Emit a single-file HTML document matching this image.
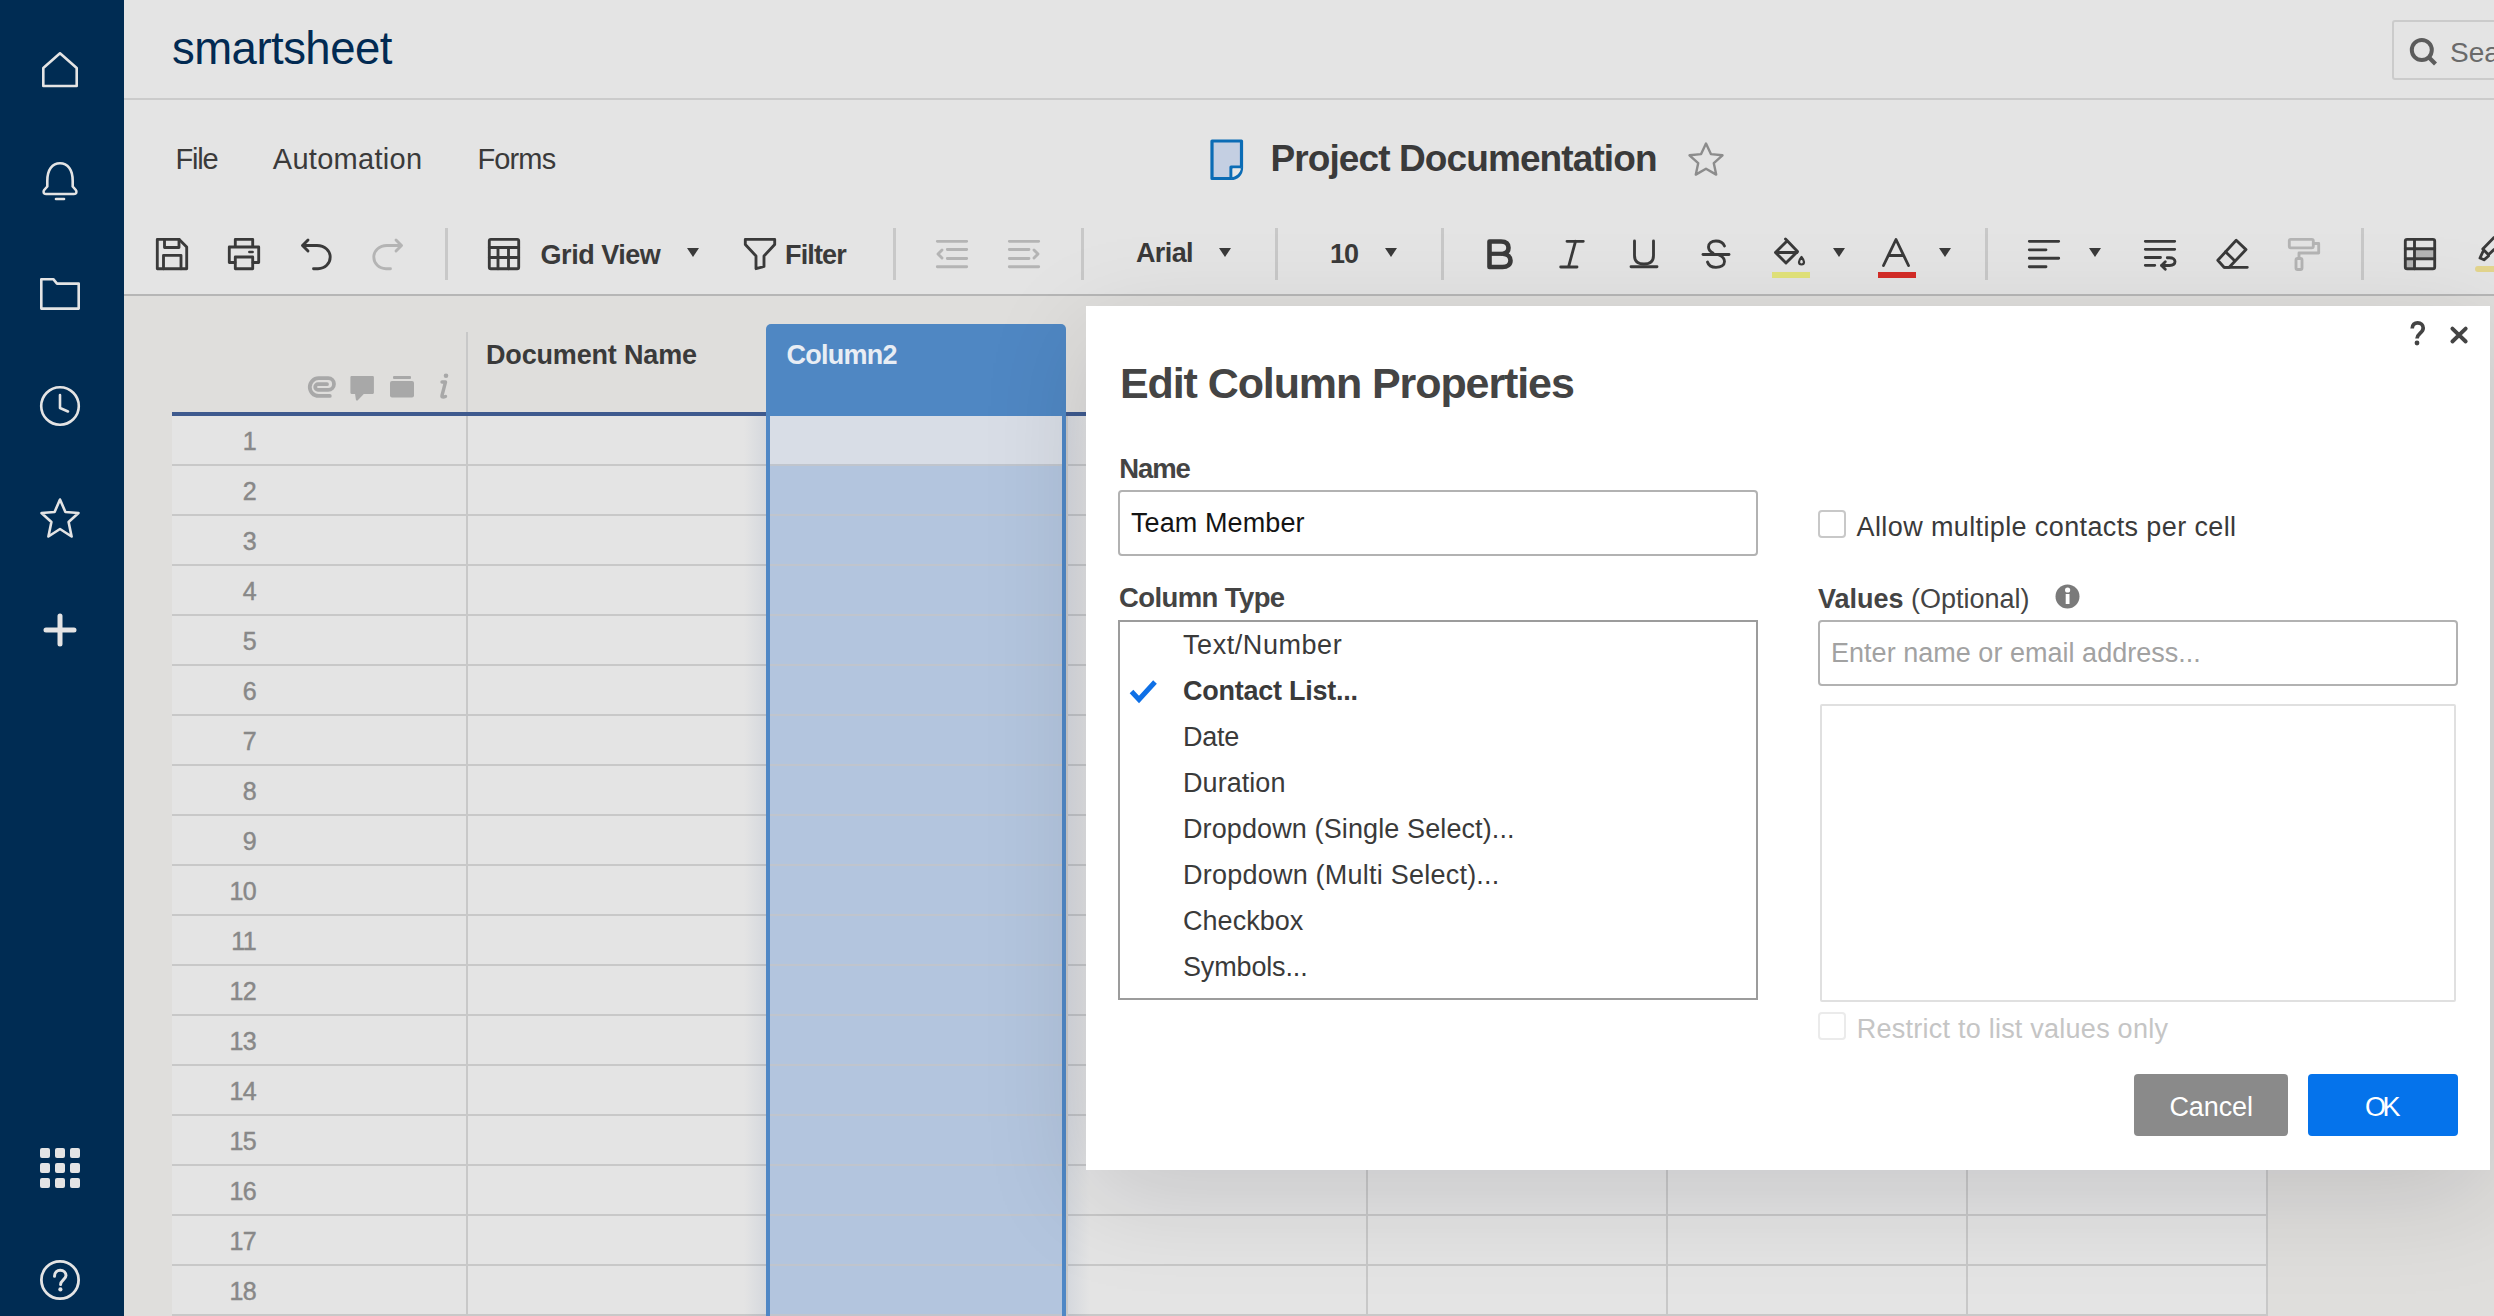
<!DOCTYPE html>
<html><head><meta charset="utf-8"><title>Smartsheet - Edit Column Properties</title>
<style>
html,body{margin:0;padding:0;}
body{width:2494px;height:1316px;overflow:hidden;position:relative;background:#e4e4e4;font-family:"Liberation Sans",sans-serif;}
.a{position:absolute;display:block;}
.t{position:absolute;white-space:nowrap;}
svg{overflow:visible;}
</style></head><body>
<div class="a" style="left:0px;top:0px;width:124px;height:1316px;background:#002c53;"></div>
<svg class="a" style="left:0px;top:0px;" width="124" height="1316" viewBox="0 0 124 1316"><path d="M43.3 68 L60 53.3 L76.7 68 L76.7 86 L43.3 86 Z" fill="none" stroke="#e4e4e4" stroke-width="2.6" stroke-linejoin="round" stroke-linecap="round"/><path d="M47.3 181 C47.3 169.5 52.5 163.3 60 163.3 C67.5 163.3 72.7 169.5 72.7 181 L72.7 186.5 L75.8 190 C77.3 192 76.3 194 74 194 L46 194 C43.7 194 42.7 192 44.2 190 L47.3 186.5 Z" fill="none" stroke="#e4e4e4" stroke-width="2.6" stroke-linejoin="round" stroke-linecap="round"/><path d="M56 199 L64 199" fill="none" stroke="#e4e4e4" stroke-width="2.6" stroke-linejoin="round" stroke-linecap="round"/><path d="M41.3 279.2 L53.3 279.2 L57 283.6 L78.7 283.6 L78.7 308.6 L41.3 308.6 Z" fill="none" stroke="#e4e4e4" stroke-width="2.6" stroke-linejoin="round" stroke-linecap="round"/><circle cx="60" cy="406" r="18.8" fill="none" stroke="#e4e4e4" stroke-width="2.6" stroke-linejoin="round" stroke-linecap="round"/><path d="M60 395 L60 408 L68 411.5" fill="none" stroke="#e4e4e4" stroke-width="2.6" stroke-linejoin="round" stroke-linecap="round"/><path d="M60 499.5 L65.4 512 L78.5 513 L68.6 522 L71.6 536.5 L60 529 L48.4 536.5 L51.4 522 L41.5 513 L54.6 512 Z" fill="none" stroke="#e4e4e4" stroke-width="2.6" stroke-linejoin="round" stroke-linecap="round"/><path d="M60 616 L60 644 M46 630 L74 630" fill="none" stroke="#e4e4e4" stroke-width="5" stroke-linecap="round"/></svg>
<div class="a" style="left:40px;top:1148px;width:10px;height:10px;background:#e4e4e4;border-radius:2px;"></div>
<div class="a" style="left:55px;top:1148px;width:10px;height:10px;background:#e4e4e4;border-radius:2px;"></div>
<div class="a" style="left:70px;top:1148px;width:10px;height:10px;background:#e4e4e4;border-radius:2px;"></div>
<div class="a" style="left:40px;top:1163px;width:10px;height:10px;background:#e4e4e4;border-radius:2px;"></div>
<div class="a" style="left:55px;top:1163px;width:10px;height:10px;background:#e4e4e4;border-radius:2px;"></div>
<div class="a" style="left:70px;top:1163px;width:10px;height:10px;background:#e4e4e4;border-radius:2px;"></div>
<div class="a" style="left:40px;top:1178px;width:10px;height:10px;background:#e4e4e4;border-radius:2px;"></div>
<div class="a" style="left:55px;top:1178px;width:10px;height:10px;background:#e4e4e4;border-radius:2px;"></div>
<div class="a" style="left:70px;top:1178px;width:10px;height:10px;background:#e4e4e4;border-radius:2px;"></div>
<svg class="a" style="left:0px;top:0px;" width="124" height="1316" viewBox="0 0 124 1316"><circle cx="60" cy="1280" r="18.6" fill="none" stroke="#e4e4e4" stroke-width="2.8"/><path d="M54.5 1276.3 C54.5 1272.3 57.2 1270.2 60.2 1270.2 C63.6 1270.2 66 1272.5 66 1275.6 C66 1279.2 60.6 1280.2 60.6 1284.6" fill="none" stroke="#e4e4e4" stroke-width="3" stroke-linecap="round"/><circle cx="60.4" cy="1289.4" r="2.1" fill="#e4e4e4"/></svg>
<div class="a" style="left:124px;top:98px;width:2370px;height:2px;background:#cbcbcb;"></div>
<div class="t" style="left:172px;top:25.5px;font-size:45.5px;line-height:45.5px;color:#022a52;font-weight:400;letter-spacing:-0.522px;">smartsheet</div>
<div class="a" style="left:2392px;top:20px;width:200px;height:56px;background:transparent;border:2px solid #cbcbcb;border-radius:3px;"></div>
<svg class="a" style="left:2405px;top:34px;" width="40" height="36" viewBox="0 0 40 36"><circle cx="16.8" cy="16" r="10" fill="none" stroke="#5c5c5c" stroke-width="4"/><path d="M23.5 23 L30.5 30" stroke="#5c5c5c" stroke-width="4.2" stroke-linecap="butt"/></svg>
<div class="t" style="left:2450px;top:38.8px;font-size:28px;line-height:28px;color:#6a6a6a;font-weight:400;">Search</div>
<div class="t" style="left:175.5px;top:144.5px;font-size:29px;line-height:29px;color:#3a3a3a;font-weight:400;letter-spacing:-1.167px;">File</div>
<div class="t" style="left:272.8px;top:144.5px;font-size:29px;line-height:29px;color:#3a3a3a;font-weight:400;letter-spacing:0.289px;">Automation</div>
<div class="t" style="left:477.4px;top:144.5px;font-size:29px;line-height:29px;color:#3a3a3a;font-weight:400;letter-spacing:-0.85px;">Forms</div>
<svg class="a" style="left:1210px;top:139px;" width="34" height="42" viewBox="0 0 34 42"><path d="M2 2 L31.5 2 L31.5 29 C31.5 35 27 39.5 21 39.5 L2 39.5 Z" fill="#c4cfe2" stroke="#0b6cb5" stroke-width="3.2" stroke-linejoin="round"/><path d="M31.5 28 L21 28 L21 39.5" fill="#fff" stroke="#0b6cb5" stroke-width="3.2" stroke-linejoin="round"/><path d="M31 29.6 L22.6 29.6 L22.6 38 C27 37 30 34 31 29.6 Z" fill="#e6e6e6"/></svg>
<div class="t" style="left:1270.5px;top:139.7px;font-size:37px;line-height:37px;color:#3a3a3a;font-weight:700;letter-spacing:-0.9px;">Project Documentation</div>
<svg class="a" style="left:1686px;top:140px;" width="40" height="40" viewBox="0 0 40 40"><path d="M20 3.5 L24.9 14.1 L36.5 15.3 L27.8 23.2 L30.2 34.6 L20 28.7 L9.8 34.6 L12.2 23.2 L3.5 15.3 L15.1 14.1 Z" fill="none" stroke="#8c8c8c" stroke-width="2.4" stroke-linejoin="round"/></svg>
<svg class="a" style="left:0px;top:0px;" width="2494" height="300" viewBox="0 0 2494 300"><path d="M157.3 239.3 L179 239.3 L186.7 247 L186.7 268.7 L157.3 268.7 Z" fill="none" stroke="#3a3a3a" stroke-width="2.85" stroke-linejoin="round" stroke-linecap="round"/><path d="M164.5 239.3 L164.5 247.5 L179 247.5 L179 239.3" fill="none" stroke="#3a3a3a" stroke-width="2.85" stroke-linejoin="round" stroke-linecap="round"/><path d="M163.5 268.7 L163.5 255.3 L181 255.3 L181 268.7" fill="none" stroke="#3a3a3a" stroke-width="2.85" stroke-linejoin="round" stroke-linecap="round"/><path d="M235.3 246.5 L235.3 239.3 L252.7 239.3 L252.7 246.5" fill="none" stroke="#3a3a3a" stroke-width="2.85" stroke-linejoin="round" stroke-linecap="round"/><path d="M235 262.5 L229.3 262.5 L229.3 247 L258.7 247 L258.7 262.5 L253 262.5" fill="none" stroke="#3a3a3a" stroke-width="2.85" stroke-linejoin="round" stroke-linecap="round"/><path d="M235.3 257 L252.7 257 L252.7 268.7 L235.3 268.7 Z" fill="none" stroke="#3a3a3a" stroke-width="2.85" stroke-linejoin="round" stroke-linecap="round"/><path d="M249.3 252 L252.7 252" fill="none" stroke="#3a3a3a" stroke-width="2.4" stroke-linejoin="round" stroke-linecap="round"/><path d="M308 240 L302.5 245.5 L308 251" fill="none" stroke="#3a3a3a" stroke-width="2.85" stroke-linejoin="round" stroke-linecap="round"/><path d="M303 245.5 L317 245.5 C325 245.5 330.2 251 330.2 257 C330.2 263.5 325 268.7 318 268.7 L313.5 268.7" fill="none" stroke="#3a3a3a" stroke-width="2.85" stroke-linejoin="round" stroke-linecap="round"/><path d="M396 240 L401.5 245.5 L396 251" fill="none" stroke="#b4b4b4" stroke-width="2.85" stroke-linejoin="round" stroke-linecap="round"/><path d="M401 245.5 L387 245.5 C379 245.5 373.8 251 373.8 257 C373.8 263.5 379 268.7 386 268.7 L390.5 268.7" fill="none" stroke="#b4b4b4" stroke-width="2.85" stroke-linejoin="round" stroke-linecap="round"/><rect x="489.3" y="239.3" width="29.4" height="29.4" rx="1.5" fill="none" stroke="#3a3a3a" stroke-width="2.85" stroke-linejoin="round" stroke-linecap="round"/><path d="M489.3 247.5 L518.7 247.5 M489.3 257.5 L518.7 257.5 M498 247.5 L498 268.7 M508.5 247.5 L508.5 268.7" fill="none" stroke="#3a3a3a" stroke-width="2.85" stroke-linejoin="round" stroke-linecap="round"/><path d="M745.3 239.3 L774.7 239.3 L774.7 244.5 L764 256 L764 266.5 L756 268.7 L756 256 L745.3 244.5 Z" fill="none" stroke="#3a3a3a" stroke-width="2.85" stroke-linejoin="round" stroke-linecap="round"/><path d="M937.3 241.3 L966.7 241.3 M947.3 249.5 L966.7 249.5 M947.3 258.5 L966.7 258.5 M937.3 266.7 L966.7 266.7" fill="none" stroke="#b4b4b4" stroke-width="2.85" stroke-linejoin="round" stroke-linecap="round"/><path d="M942 250 L938 254 L942 258" fill="none" stroke="#b4b4b4" stroke-width="2.85" stroke-linejoin="round" stroke-linecap="round"/><path d="M1009.3 241.3 L1038.7 241.3 M1009.3 249.5 L1029 249.5 M1009.3 258.5 L1029 258.5 M1009.3 266.7 L1038.7 266.7" fill="none" stroke="#b4b4b4" stroke-width="2.85" stroke-linejoin="round" stroke-linecap="round"/><path d="M1034 250 L1038 254 L1034 258" fill="none" stroke="#b4b4b4" stroke-width="2.85" stroke-linejoin="round" stroke-linecap="round"/><path d="M1489.5 241.5 L1501 241.5 C1506 241.5 1508.5 244 1508.5 247.8 C1508.5 251 1506.5 253.3 1503 253.8 C1507.5 254.2 1510.5 257 1510.5 260.5 C1510.5 264.5 1507.5 267 1502.5 267 L1489.5 267 Z" fill="none" stroke="#3a3a3a" stroke-width="4.6" stroke-linejoin="round"/><path d="M1491 253.8 L1502 253.8" stroke="#3a3a3a" stroke-width="4.2"/><path d="M1567 241.3 L1583.3 241.3 M1560.7 267 L1577 267 M1575.5 241.3 L1568.5 267" fill="none" stroke="#3a3a3a" stroke-width="2.85" stroke-linejoin="round" stroke-linecap="round"/><path d="M1634.5 241 L1634.5 255.5 C1634.5 261 1638 264 1644 264 C1650 264 1653.5 261 1653.5 255.5 L1653.5 241" fill="none" stroke="#3a3a3a" stroke-width="2.85" stroke-linejoin="round" stroke-linecap="round"/><path d="M1631 266.7 L1657 266.7" fill="none" stroke="#3a3a3a" stroke-width="2.85" stroke-linejoin="round" stroke-linecap="round"/><path d="M1724.5 246 C1723 242.5 1720 241 1716 241 C1711.5 241 1708.5 243.5 1708.5 247 C1708.5 249.5 1710 251.5 1713 253" fill="none" stroke="#3a3a3a" stroke-width="2.85" stroke-linejoin="round" stroke-linecap="round"/><path d="M1719 255 C1722.5 256.5 1724.5 258.5 1724.5 261.5 C1724.5 265 1721 267.3 1716 267.3 C1711.5 267.3 1708.5 265.5 1707.5 262" fill="none" stroke="#3a3a3a" stroke-width="2.85" stroke-linejoin="round" stroke-linecap="round"/><path d="M1703 254.5 L1729 254.5" fill="none" stroke="#3a3a3a" stroke-width="2.85" stroke-linejoin="round" stroke-linecap="round"/><path d="M1785.5 239 L1787 240.5 L1797.5 251.5 L1786 263 L1775.5 252.5 L1786 242" fill="none" stroke="#3a3a3a" stroke-width="2.85" stroke-linejoin="round" stroke-linecap="round"/><path d="M1776 252.5 L1797 252.5" fill="none" stroke="#3a3a3a" stroke-width="2.85" stroke-linejoin="round" stroke-linecap="round"/><path d="M1801.5 257 C1799.5 259.5 1799 261 1799 262 C1799 263.5 1800.2 264.5 1801.5 264.5 C1802.8 264.5 1804 263.5 1804 262 C1804 261 1803.5 259.5 1801.5 257 Z" fill="none" stroke="#3a3a3a" stroke-width="2.2" stroke-linejoin="round" stroke-linecap="round"/><path d="M1883.5 265.5 L1896 239.5 L1908.5 265.5 M1888.5 255.5 L1903.5 255.5" fill="none" stroke="#3a3a3a" stroke-width="2.85" stroke-linejoin="round" stroke-linecap="round"/><path d="M2029.3 241.3 L2058.7 241.3 M2029.3 249.8 L2046 249.8 M2029.3 258.2 L2058.7 258.2 M2029.3 266.7 L2046 266.7" fill="none" stroke="#3a3a3a" stroke-width="2.85" stroke-linejoin="round" stroke-linecap="round"/><path d="M2145.3 241.3 L2174.7 241.3 M2145.3 249.3 L2174.7 249.3 M2145.3 257.5 L2160.5 257.5 M2145.3 265.3 L2154.8 265.3" fill="none" stroke="#3a3a3a" stroke-width="2.85" stroke-linejoin="round" stroke-linecap="round"/><path d="M2167.3 257.7 L2169.5 257.7 C2173 257.7 2175 259.5 2175 261.6 C2175 263.8 2173 265.5 2169.5 265.5 L2161.8 265.5" fill="none" stroke="#3a3a3a" stroke-width="2.85" stroke-linejoin="round" stroke-linecap="round"/><path d="M2165.3 261.8 L2161.5 265.5 L2165.3 269.2" fill="none" stroke="#3a3a3a" stroke-width="2.85" stroke-linejoin="round" stroke-linecap="round"/><path d="M2236.2 240.3 L2246 249.6 L2229.2 267.3 L2224 267.3 L2217.8 260.3 Z" fill="none" stroke="#3a3a3a" stroke-width="2.85" stroke-linejoin="round" stroke-linecap="round"/><path d="M2225.5 251.8 L2234.2 260.2 M2224.5 267.3 L2247.3 267.3" fill="none" stroke="#3a3a3a" stroke-width="2.85" stroke-linejoin="round" stroke-linecap="round"/><rect x="2289.3" y="239.3" width="24" height="8.5" rx="1.5" fill="none" stroke="#b4b4b4" stroke-width="2.85" stroke-linejoin="round" stroke-linecap="round"/><path d="M2313.3 243.5 L2318.7 243.5 L2318.7 253 L2299 253 L2299 258.5" fill="none" stroke="#b4b4b4" stroke-width="2.85" stroke-linejoin="round" stroke-linecap="round"/><rect x="2296" y="258.5" width="6" height="11" rx="1.5" fill="none" stroke="#b4b4b4" stroke-width="2.85" stroke-linejoin="round" stroke-linecap="round"/><rect x="2416" y="250" width="18" height="7.5" fill="#b4b4b4"/><rect x="2406" y="260" width="8" height="7.5" fill="#b4b4b4"/><rect x="2405.3" y="239.3" width="29.4" height="29.4" rx="1.8" fill="none" stroke="#3a3a3a" stroke-width="2.85" stroke-linejoin="round" stroke-linecap="round"/><path d="M2405.3 248.7 L2434.7 248.7 M2405.3 258.7 L2434.7 258.7 M2414.5 239.3 L2414.5 268.7" fill="none" stroke="#3a3a3a" stroke-width="2.85" stroke-linejoin="round" stroke-linecap="round"/><path d="M2494 237.5 L2482.8 249 L2488.5 254.8 L2494 249.5" fill="none" stroke="#3a3a3a" stroke-width="2.85" stroke-linejoin="round" stroke-linecap="round"/><path d="M2483 251.5 L2480 258 L2484 259.8 L2488.5 256" fill="none" stroke="#3a3a3a" stroke-width="2.85" stroke-linejoin="round" stroke-linecap="round"/></svg>
<div class="a" style="left:1772px;top:272px;width:38px;height:6px;background:#e2e37a;"></div>
<div class="a" style="left:1878px;top:272px;width:38px;height:6px;background:#d42c27;"></div>
<div class="a" style="left:2475px;top:266px;width:30px;height:6px;background:#e3d58e;border-radius:3px;"></div>
<div class="a" style="left:445px;top:228px;width:3px;height:52px;background:#c8c8c8;"></div>
<div class="a" style="left:893px;top:228px;width:3px;height:52px;background:#c8c8c8;"></div>
<div class="a" style="left:1081px;top:228px;width:3px;height:52px;background:#c8c8c8;"></div>
<div class="a" style="left:1275px;top:228px;width:3px;height:52px;background:#c8c8c8;"></div>
<div class="a" style="left:1441px;top:228px;width:3px;height:52px;background:#c8c8c8;"></div>
<div class="a" style="left:1985px;top:228px;width:3px;height:52px;background:#c8c8c8;"></div>
<div class="a" style="left:2361px;top:228px;width:3px;height:52px;background:#c8c8c8;"></div>
<svg class="a" style="left:0px;top:0px;" width="2494" height="300" viewBox="0 0 2494 300"><path d="M687 248 L699 248 L693 257 Z" fill="#3a3a3a"/><path d="M1219 248 L1231 248 L1225 257 Z" fill="#3a3a3a"/><path d="M1385 248 L1397 248 L1391 257 Z" fill="#3a3a3a"/><path d="M1833 248 L1845 248 L1839 257 Z" fill="#3a3a3a"/><path d="M1939 248 L1951 248 L1945 257 Z" fill="#3a3a3a"/><path d="M2089 248 L2101 248 L2095 257 Z" fill="#3a3a3a"/></svg>
<div class="t" style="left:540.6px;top:241.5px;font-size:27px;line-height:27px;color:#3a3a3a;font-weight:700;letter-spacing:-0.487px;">Grid View</div>
<div class="t" style="left:785px;top:241.5px;font-size:27px;line-height:27px;color:#3a3a3a;font-weight:700;letter-spacing:-0.86px;">Filter</div>
<div class="t" style="left:1136px;top:239.7px;font-size:27px;line-height:27px;color:#3a3a3a;font-weight:700;letter-spacing:-0.625px;">Arial</div>
<div class="t" style="left:1330px;top:241.3px;font-size:27px;line-height:27px;color:#3a3a3a;font-weight:700;letter-spacing:-1.0px;">10</div>
<div class="a" style="left:124px;top:294px;width:2370px;height:2px;background:#b6b6b6;"></div>
<div class="a" style="left:124px;top:296px;width:2370px;height:1020px;background:#dfdedc;"></div>
<div class="a" style="left:172px;top:416px;width:2094px;height:900px;background:#e4e4e4;"></div>
<div class="a" style="left:172px;top:464px;width:2096px;height:2px;background:#c8c8c8;"></div>
<div class="a" style="left:172px;top:514px;width:2096px;height:2px;background:#c8c8c8;"></div>
<div class="a" style="left:172px;top:564px;width:2096px;height:2px;background:#c8c8c8;"></div>
<div class="a" style="left:172px;top:614px;width:2096px;height:2px;background:#c8c8c8;"></div>
<div class="a" style="left:172px;top:664px;width:2096px;height:2px;background:#c8c8c8;"></div>
<div class="a" style="left:172px;top:714px;width:2096px;height:2px;background:#c8c8c8;"></div>
<div class="a" style="left:172px;top:764px;width:2096px;height:2px;background:#c8c8c8;"></div>
<div class="a" style="left:172px;top:814px;width:2096px;height:2px;background:#c8c8c8;"></div>
<div class="a" style="left:172px;top:864px;width:2096px;height:2px;background:#c8c8c8;"></div>
<div class="a" style="left:172px;top:914px;width:2096px;height:2px;background:#c8c8c8;"></div>
<div class="a" style="left:172px;top:964px;width:2096px;height:2px;background:#c8c8c8;"></div>
<div class="a" style="left:172px;top:1014px;width:2096px;height:2px;background:#c8c8c8;"></div>
<div class="a" style="left:172px;top:1064px;width:2096px;height:2px;background:#c8c8c8;"></div>
<div class="a" style="left:172px;top:1114px;width:2096px;height:2px;background:#c8c8c8;"></div>
<div class="a" style="left:172px;top:1164px;width:2096px;height:2px;background:#c8c8c8;"></div>
<div class="a" style="left:172px;top:1214px;width:2096px;height:2px;background:#c8c8c8;"></div>
<div class="a" style="left:172px;top:1264px;width:2096px;height:2px;background:#c8c8c8;"></div>
<div class="a" style="left:172px;top:1314px;width:2096px;height:2px;background:#c8c8c8;"></div>
<div class="a" style="left:466px;top:332px;width:2px;height:984px;background:#c8c8c8;"></div>
<div class="a" style="left:1066px;top:416px;width:2px;height:900px;background:#c8c8c8;"></div>
<div class="a" style="left:1366px;top:416px;width:2px;height:900px;background:#c8c8c8;"></div>
<div class="a" style="left:1666px;top:416px;width:2px;height:900px;background:#c8c8c8;"></div>
<div class="a" style="left:1966px;top:416px;width:2px;height:900px;background:#c8c8c8;"></div>
<div class="a" style="left:2266px;top:416px;width:2px;height:900px;background:#c8c8c8;"></div>
<div class="a" style="left:172px;top:412px;width:2094px;height:4px;background:#3e5a8e;"></div>
<svg class="a" style="left:0px;top:0px;" width="2494" height="1316" viewBox="0 0 2494 1316"><path d="M329.8 395.9 L318.6 395.9 A8.85 8.85 0 0 1 318.6 378.2 L328.2 378.2 A5.8 5.8 0 0 1 328.2 389.8 L318 389.8 A2.8 2.8 0 0 1 318 384.2 L327 384.2" fill="none" stroke="#a8a8a8" stroke-width="3.8" stroke-linecap="round"/><path d="M351.5 377.2 L372.8 377.2 L372.8 392.8 L363.5 392.8 L357 399.5 L356 392.8 L351.5 392.8 Z" fill="#a8a8a8" stroke="#a8a8a8" stroke-width="2.2" stroke-linejoin="round"/><rect x="390" y="381" width="24" height="16.5" rx="2" fill="#a8a8a8"/><rect x="393" y="376" width="18" height="3" rx="1" fill="#a8a8a8"/><circle cx="446" cy="375.8" r="2.3" fill="#a8a8a8"/><path d="M442 382 L445.5 382 L442 395.5 C441.7 397 443 397.5 445.5 396.5" fill="none" stroke="#a8a8a8" stroke-width="3.4" stroke-linecap="round" stroke-linejoin="round"/></svg>
<div class="t" style="left:486px;top:342.1px;font-size:27px;line-height:27px;color:#3a3a3a;font-weight:700;letter-spacing:-0.167px;">Document Name</div>
<div class="t" style="right:2238px;top:429.3px;font-size:25px;line-height:25px;color:#888888;font-weight:400;letter-spacing:-0.6px;-webkit-text-stroke:0.45px #888;">1</div>
<div class="t" style="right:2238px;top:479.3px;font-size:25px;line-height:25px;color:#888888;font-weight:400;letter-spacing:-0.6px;-webkit-text-stroke:0.45px #888;">2</div>
<div class="t" style="right:2238px;top:529.3px;font-size:25px;line-height:25px;color:#888888;font-weight:400;letter-spacing:-0.6px;-webkit-text-stroke:0.45px #888;">3</div>
<div class="t" style="right:2238px;top:579.3px;font-size:25px;line-height:25px;color:#888888;font-weight:400;letter-spacing:-0.6px;-webkit-text-stroke:0.45px #888;">4</div>
<div class="t" style="right:2238px;top:629.3px;font-size:25px;line-height:25px;color:#888888;font-weight:400;letter-spacing:-0.6px;-webkit-text-stroke:0.45px #888;">5</div>
<div class="t" style="right:2238px;top:679.3px;font-size:25px;line-height:25px;color:#888888;font-weight:400;letter-spacing:-0.6px;-webkit-text-stroke:0.45px #888;">6</div>
<div class="t" style="right:2238px;top:729.3px;font-size:25px;line-height:25px;color:#888888;font-weight:400;letter-spacing:-0.6px;-webkit-text-stroke:0.45px #888;">7</div>
<div class="t" style="right:2238px;top:779.3px;font-size:25px;line-height:25px;color:#888888;font-weight:400;letter-spacing:-0.6px;-webkit-text-stroke:0.45px #888;">8</div>
<div class="t" style="right:2238px;top:829.3px;font-size:25px;line-height:25px;color:#888888;font-weight:400;letter-spacing:-0.6px;-webkit-text-stroke:0.45px #888;">9</div>
<div class="t" style="right:2238px;top:879.3px;font-size:25px;line-height:25px;color:#888888;font-weight:400;letter-spacing:-0.6px;-webkit-text-stroke:0.45px #888;">10</div>
<div class="t" style="right:2238px;top:929.3px;font-size:25px;line-height:25px;color:#888888;font-weight:400;letter-spacing:-0.6px;-webkit-text-stroke:0.45px #888;">11</div>
<div class="t" style="right:2238px;top:979.3px;font-size:25px;line-height:25px;color:#888888;font-weight:400;letter-spacing:-0.6px;-webkit-text-stroke:0.45px #888;">12</div>
<div class="t" style="right:2238px;top:1029.3px;font-size:25px;line-height:25px;color:#888888;font-weight:400;letter-spacing:-0.6px;-webkit-text-stroke:0.45px #888;">13</div>
<div class="t" style="right:2238px;top:1079.3px;font-size:25px;line-height:25px;color:#888888;font-weight:400;letter-spacing:-0.6px;-webkit-text-stroke:0.45px #888;">14</div>
<div class="t" style="right:2238px;top:1129.3px;font-size:25px;line-height:25px;color:#888888;font-weight:400;letter-spacing:-0.6px;-webkit-text-stroke:0.45px #888;">15</div>
<div class="t" style="right:2238px;top:1179.3px;font-size:25px;line-height:25px;color:#888888;font-weight:400;letter-spacing:-0.6px;-webkit-text-stroke:0.45px #888;">16</div>
<div class="t" style="right:2238px;top:1229.3px;font-size:25px;line-height:25px;color:#888888;font-weight:400;letter-spacing:-0.6px;-webkit-text-stroke:0.45px #888;">17</div>
<div class="t" style="right:2238px;top:1279.3px;font-size:25px;line-height:25px;color:#888888;font-weight:400;letter-spacing:-0.6px;-webkit-text-stroke:0.45px #888;">18</div>
<div class="a" style="left:766px;top:324px;width:300px;height:92px;background:#4f87c3;border-radius:5px 5px 0 0;"></div>
<div class="t" style="left:786.4px;top:342.1px;font-size:27px;line-height:27px;color:#e8edf4;font-weight:700;letter-spacing:-0.75px;">Column2</div>
<div class="a" style="left:766px;top:416px;width:300px;height:900px;background:#b3c5de;"></div>
<div class="a" style="left:770px;top:416px;width:292px;height:48px;background:#d8dde6;"></div>
<div class="a" style="left:770px;top:464px;width:292px;height:2px;background:#c0c5cd;"></div>
<div class="a" style="left:770px;top:514px;width:292px;height:2px;background:#c0c5cd;"></div>
<div class="a" style="left:770px;top:564px;width:292px;height:2px;background:#c0c5cd;"></div>
<div class="a" style="left:770px;top:614px;width:292px;height:2px;background:#c0c5cd;"></div>
<div class="a" style="left:770px;top:664px;width:292px;height:2px;background:#c0c5cd;"></div>
<div class="a" style="left:770px;top:714px;width:292px;height:2px;background:#c0c5cd;"></div>
<div class="a" style="left:770px;top:764px;width:292px;height:2px;background:#c0c5cd;"></div>
<div class="a" style="left:770px;top:814px;width:292px;height:2px;background:#c0c5cd;"></div>
<div class="a" style="left:770px;top:864px;width:292px;height:2px;background:#c0c5cd;"></div>
<div class="a" style="left:770px;top:914px;width:292px;height:2px;background:#c0c5cd;"></div>
<div class="a" style="left:770px;top:964px;width:292px;height:2px;background:#c0c5cd;"></div>
<div class="a" style="left:770px;top:1014px;width:292px;height:2px;background:#c0c5cd;"></div>
<div class="a" style="left:770px;top:1064px;width:292px;height:2px;background:#c0c5cd;"></div>
<div class="a" style="left:770px;top:1114px;width:292px;height:2px;background:#c0c5cd;"></div>
<div class="a" style="left:770px;top:1164px;width:292px;height:2px;background:#c0c5cd;"></div>
<div class="a" style="left:770px;top:1214px;width:292px;height:2px;background:#c0c5cd;"></div>
<div class="a" style="left:770px;top:1264px;width:292px;height:2px;background:#c0c5cd;"></div>
<div class="a" style="left:770px;top:1314px;width:292px;height:2px;background:#c0c5cd;"></div>
<div class="a" style="left:744px;top:416px;width:22px;height:900px;background:linear-gradient(to right, rgba(80,110,160,0), rgba(80,110,160,0.10));"></div>
<div class="a" style="left:1068px;top:416px;width:22px;height:900px;background:linear-gradient(to left, rgba(80,110,160,0), rgba(80,110,160,0.10));"></div>
<div class="a" style="left:766px;top:416px;width:4px;height:900px;background:#4f87c5;"></div>
<div class="a" style="left:1062px;top:416px;width:4px;height:900px;background:#4f87c5;"></div>
<div class="a" style="left:1086px;top:306px;width:1404px;height:864px;background:#ffffff;box-shadow:0 26px 100px rgba(0,10,20,0.13);"></div>
<div class="t" style="left:1120px;top:361.9px;font-size:43px;line-height:43px;color:#444444;font-weight:700;letter-spacing:-1.095px;">Edit Column Properties</div>
<svg class="a" style="left:0px;top:0px;" width="2494" height="1316" viewBox="0 0 2494 1316"><path d="M2412.2 328.6 C2412.2 324.6 2414.8 322.8 2417.6 322.8 C2421 322.8 2423.2 325 2423.2 328 C2423.2 330.6 2421.6 332 2420 333.4 C2418.3 334.9 2417 336.2 2417 338.6" fill="none" stroke="#444" stroke-width="3.7"/><circle cx="2417" cy="343" r="2.4" fill="#444"/></svg>
<svg class="a" style="left:0px;top:0px;" width="2494" height="1316" viewBox="0 0 2494 1316"><path d="M2452.4 328.6 L2465.7 341.5 M2465.7 328.6 L2452.4 341.5" stroke="#444" stroke-width="3.9" stroke-linecap="round"/></svg>
<div class="t" style="left:1119.2px;top:454.7px;font-size:27.5px;line-height:27.5px;color:#444444;font-weight:700;letter-spacing:-1.067px;">Name</div>
<div class="a" style="left:1118px;top:490px;width:640px;height:66px;background:#fff;box-sizing:border-box;border:2px solid #b2b2b2;border-radius:4px;"></div>
<div class="t" style="left:1131px;top:509.6px;font-size:27px;line-height:27px;color:#141414;font-weight:400;letter-spacing:0.1px;">Team Member</div>
<div class="t" style="left:1119px;top:584.2px;font-size:27.5px;line-height:27.5px;color:#444444;font-weight:700;letter-spacing:-0.6px;">Column Type</div>
<div class="a" style="left:1118px;top:620px;width:640px;height:380px;background:#fff;box-sizing:border-box;border:2px solid #9c9c9c;"></div>
<div class="t" style="left:1183px;top:631.9px;font-size:27px;line-height:27px;color:#3a3a3a;font-weight:400;letter-spacing:0.56px;">Text/Number</div>
<div class="t" style="left:1183px;top:677.9px;font-size:27px;line-height:27px;color:#3a3a3a;font-weight:700;letter-spacing:-0.257px;">Contact List...</div>
<div class="t" style="left:1183px;top:723.8px;font-size:27px;line-height:27px;color:#3a3a3a;font-weight:400;letter-spacing:-0.267px;">Date</div>
<div class="t" style="left:1183px;top:769.7px;font-size:27px;line-height:27px;color:#3a3a3a;font-weight:400;letter-spacing:0.057px;">Duration</div>
<div class="t" style="left:1183px;top:815.7px;font-size:27px;line-height:27px;color:#3a3a3a;font-weight:400;letter-spacing:0.112px;">Dropdown (Single Select)...</div>
<div class="t" style="left:1183px;top:861.6px;font-size:27px;line-height:27px;color:#3a3a3a;font-weight:400;letter-spacing:0.228px;">Dropdown (Multi Select)...</div>
<div class="t" style="left:1183px;top:907.5px;font-size:27px;line-height:27px;color:#3a3a3a;font-weight:400;letter-spacing:0.043px;">Checkbox</div>
<div class="t" style="left:1183px;top:953.5px;font-size:27px;line-height:27px;color:#3a3a3a;font-weight:400;letter-spacing:-0.156px;">Symbols...</div>
<svg class="a" style="left:1128px;top:678px;" width="32" height="28" viewBox="0 0 32 28"><path d="M3.5 13.5 L11 21.5 L27 4" fill="none" stroke="#0f70e6" stroke-width="5" stroke-linecap="butt" stroke-linejoin="miter"/></svg>
<div class="a" style="left:1818px;top:510px;width:28px;height:28px;background:#fff;box-sizing:border-box;border:2px solid #c8c8c8;border-radius:4px;"></div>
<div class="t" style="left:1856.6px;top:514.3px;font-size:27px;line-height:27px;color:#3a3a3a;font-weight:400;letter-spacing:0.381px;">Allow multiple contacts per cell</div>
<div class="t" style="left:1818px;top:586.1px;font-size:27px;line-height:27px;color:#444444;font-weight:400;"><b style="font-weight:700">Values</b> (Optional)</div>
<svg class="a" style="left:2055px;top:584px;" width="26" height="26" viewBox="0 0 26 26"><circle cx="12.5" cy="12.5" r="12" fill="#7a7a7a"/><rect x="10.7" y="10" width="3.8" height="10" fill="#fff"/><circle cx="12.6" cy="6" r="2.6" fill="#fff"/></svg>
<div class="a" style="left:1818px;top:620px;width:640px;height:66px;background:#fff;box-sizing:border-box;border:2px solid #b2b2b2;border-radius:4px;"></div>
<div class="t" style="left:1831px;top:639.6px;font-size:27px;line-height:27px;color:#a2a2a2;font-weight:400;letter-spacing:0.024px;">Enter name or email address...</div>
<div class="a" style="left:1820px;top:704px;width:636px;height:298px;background:#fff;box-sizing:border-box;border:2px solid #e0e0e0;border-radius:2px;"></div>
<div class="a" style="left:1818px;top:1012px;width:28px;height:28px;background:#fff;box-sizing:border-box;border:2px solid #ebebeb;border-radius:4px;"></div>
<div class="t" style="left:1856.7px;top:1016.1px;font-size:27px;line-height:27px;color:#c5c5c5;font-weight:400;letter-spacing:0.244px;">Restrict to list values only</div>
<div class="a" style="left:2134px;top:1074px;width:154px;height:62px;background:#8a8a8a;border-radius:4px;"></div>
<div class="t" style="left:2169.4px;top:1094.1px;font-size:27px;line-height:27px;color:#ffffff;font-weight:400;letter-spacing:-0.08px;">Cancel</div>
<div class="a" style="left:2308px;top:1074px;width:150px;height:62px;background:#0573eb;border-radius:4px;"></div>
<div class="t" style="left:2365px;top:1094.1px;font-size:27px;line-height:27px;color:#ffffff;font-weight:400;letter-spacing:-3.5px;">OK</div>
</body></html>
